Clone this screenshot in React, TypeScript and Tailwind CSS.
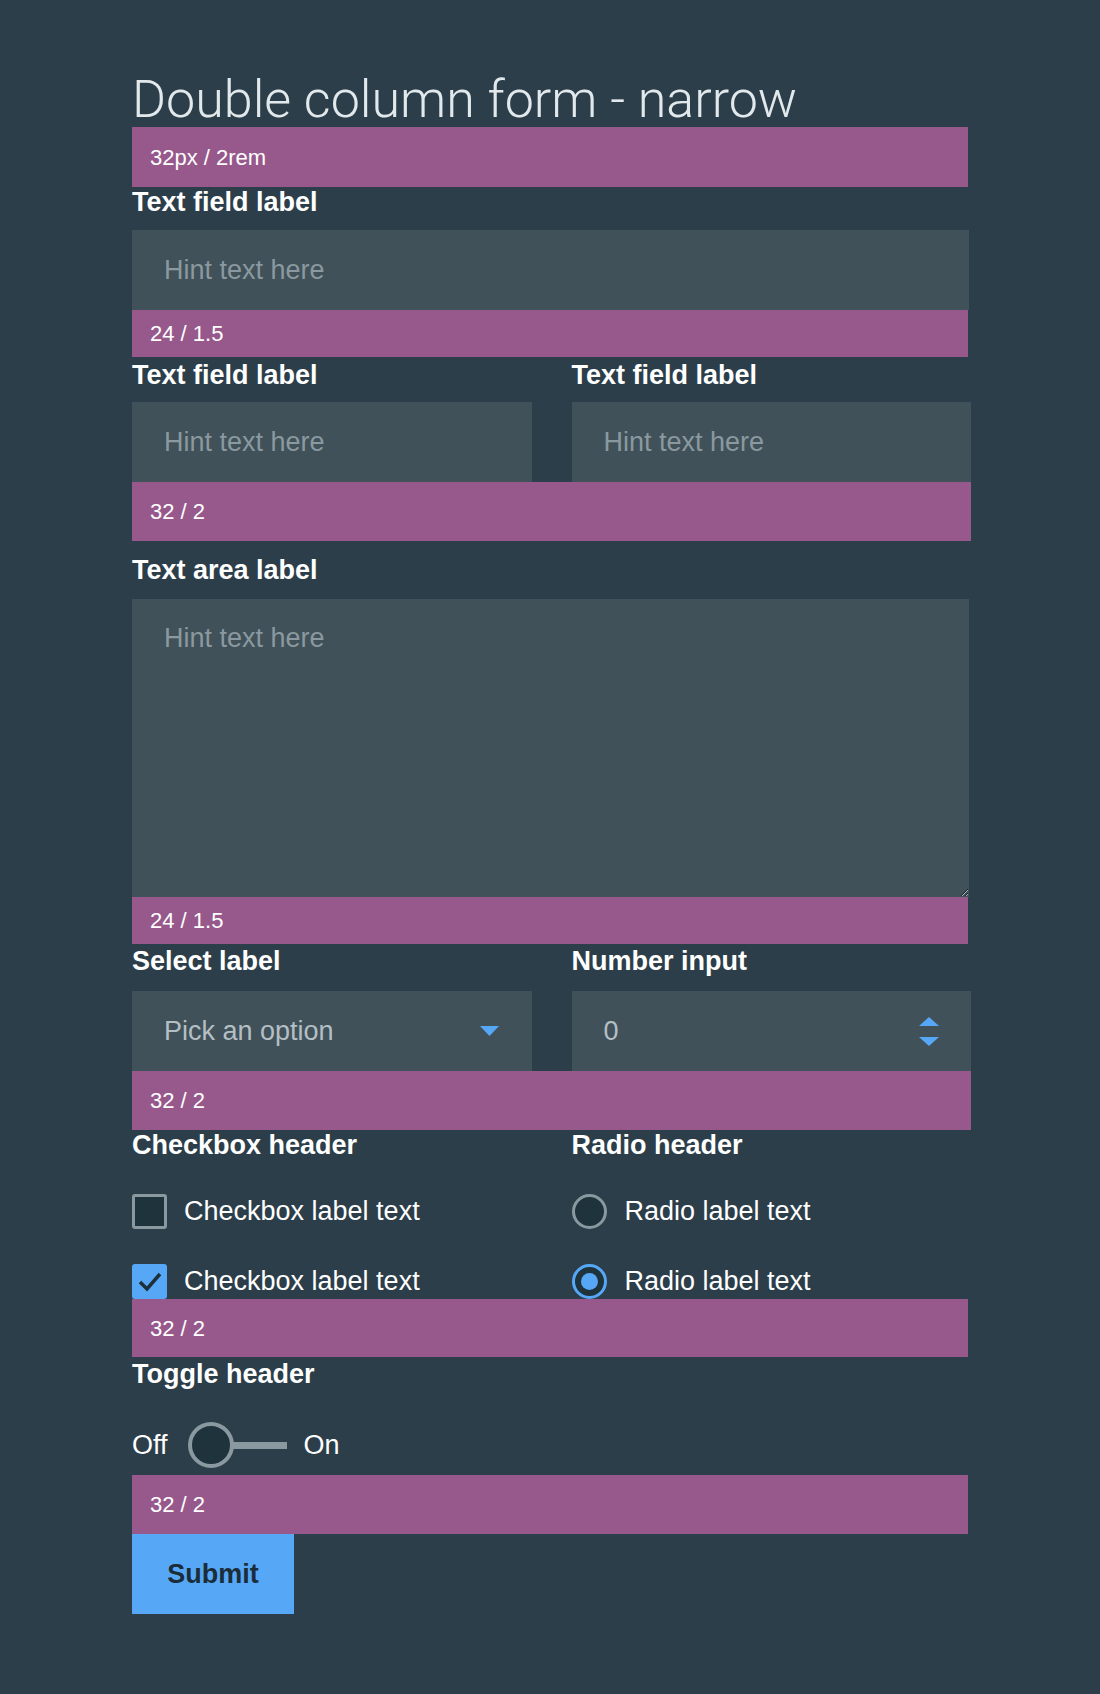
import * as React from "react"

function Band({ text, wide = false }: { text: string; wide?: boolean }) {
  return (
    <div
      className={`flex items-center bg-[#97598b] pl-[18px] text-[22px] text-white ${wide ? "w-[839px]" : "w-[836px]"}`}
    >
      {text}
    </div>
  )
}

function Label({ children }: { children: React.ReactNode }) {
  return <div className="text-[27px] font-bold leading-[30px] text-white">{children}</div>
}

function Checkbox({ checked }: { checked?: boolean }) {
  if (checked) {
    return (
      <span className="flex h-[35px] w-[35px] shrink-0 items-center justify-center rounded-[3px] bg-[#56a8f7]">
        <svg width="26" height="22" viewBox="0 0 26 22">
          <path d="M3 11 L10 18 L23 3" fill="none" stroke="#1d2f3a" strokeWidth="3.5" />
        </svg>
      </span>
    )
  }
  return <span className="h-[35px] w-[35px] shrink-0 rounded-[3px] border-[3px] border-[#8a989f] bg-[#1f333d]" />
}

function Radio({ checked }: { checked?: boolean }) {
  if (checked) {
    return (
      <span className="flex h-[35px] w-[35px] shrink-0 items-center justify-center rounded-full border-[3px] border-[#56a8f7] bg-[#1f333d]">
        <span className="h-[17px] w-[17px] rounded-full bg-[#56a8f7]" />
      </span>
    )
  }
  return <span className="h-[35px] w-[35px] shrink-0 rounded-full border-[3px] border-[#8a989f] bg-[#1f333d]" />
}

export default function App() {
  const [on, setOn] = React.useState(false)
  const [num, setNum] = React.useState(0)

  return (
    <div className="min-h-[1694px] bg-[#2c3e4a] pl-[132px] font-['Liberation_Sans',Arial,sans-serif]">
      <div className="w-[839px]">
        <h1 className="h-[127px] pt-[74px] font-['Roboto',sans-serif] text-[52px] font-light leading-[52px] text-[#e2e9ec]">
          Double column form - narrow
        </h1>
        <div className="h-[60px] flex"><Band text="32px / 2rem" /></div>

        <div className="h-[43px]"><Label>Text field label</Label></div>
        <input
          placeholder="Hint text here"
          className="h-[80px] w-[837px] bg-[#405159] px-[32px] text-[27px] text-white outline-none placeholder:text-[#8a999f]"
        />
        <div className="h-[47px] flex"><Band text="24 / 1.5" /></div>

        <div className="grid h-[45px] grid-cols-2 gap-[40px] pt-[3px]">
          <Label>Text field label</Label>
          <Label>Text field label</Label>
        </div>
        <div className="grid grid-cols-2 gap-[40px]">
          <input
            placeholder="Hint text here"
            className="h-[80px] bg-[#405159] px-[32px] text-[27px] text-white outline-none placeholder:text-[#8a999f]"
          />
          <input
            placeholder="Hint text here"
            className="h-[80px] bg-[#405159] px-[32px] text-[27px] text-white outline-none placeholder:text-[#8a999f]"
          />
        </div>
        <div className="h-[59px] flex"><Band text="32 / 2" wide /></div>

        <div className="h-[58px] pt-[14px]"><Label>Text area label</Label></div>
        <textarea
          placeholder="Hint text here"
          className="block h-[298px] w-[837px] resize-y bg-[#405159] px-[32px] pt-[24px] text-[27px] leading-[30px] text-white outline-none placeholder:text-[#8a999f]"
        />
        <div className="h-[47px] flex"><Band text="24 / 1.5" /></div>

        <div className="grid h-[47px] grid-cols-2 gap-[40px] pt-[2px]">
          <Label>Select label</Label>
          <Label>Number input</Label>
        </div>
        <div className="grid grid-cols-2 gap-[40px]">
          <div className="flex h-[80px] items-center justify-between bg-[#405159] pl-[32px] pr-[33px] text-[27px] text-[#b4bfc4]">
            <span>Pick an option</span>
            <svg width="19" height="10" viewBox="0 0 19 10">
              <path d="M0 0 H19 L9.5 10 Z" fill="#56a8f7" />
            </svg>
          </div>
          <div className="flex h-[80px] items-center justify-between bg-[#405159] pl-[32px] pr-[32px] text-[27px] text-[#b4bfc4]">
            <span>{num}</span>
            <div className="flex flex-col gap-[11px]">
              <svg width="20" height="9" viewBox="0 0 20 9" onClick={() => setNum(num + 1)}>
                <path d="M0 9 H20 L10 0 Z" fill="#56a8f7" />
              </svg>
              <svg width="20" height="9" viewBox="0 0 20 9" onClick={() => setNum(num - 1)}>
                <path d="M0 0 H20 L10 9 Z" fill="#56a8f7" />
              </svg>
            </div>
          </div>
        </div>
        <div className="h-[59px] flex"><Band text="32 / 2" wide /></div>

        <div className="grid grid-cols-2 gap-[40px]">
          <div>
            <div className="h-[46px]"><Label>Checkbox header</Label></div>
            <div className="flex h-[70px] items-start gap-[17px] pt-[18px]">
              <Checkbox />
              <span className="text-[27px] leading-[35px] text-white">Checkbox label text</span>
            </div>
            <div className="flex h-[53px] items-start gap-[17px] pt-[18px]">
              <Checkbox checked />
              <span className="text-[27px] leading-[35px] text-white">Checkbox label text</span>
            </div>
          </div>
          <div>
            <div className="h-[46px]"><Label>Radio header</Label></div>
            <div className="flex h-[70px] items-start gap-[18px] pt-[18px]">
              <Radio />
              <span className="text-[27px] leading-[35px] text-white">Radio label text</span>
            </div>
            <div className="flex h-[53px] items-start gap-[18px] pt-[18px]">
              <Radio checked />
              <span className="text-[27px] leading-[35px] text-white">Radio label text</span>
            </div>
          </div>
        </div>
        <div className="h-[58px] flex"><Band text="32 / 2" /></div>

        <div className="h-[65px] pt-[2px]"><Label>Toggle header</Label></div>
        <div className="flex h-[53px] items-start text-[27px] leading-[46px] text-white">
          <span>Off</span>
          <button className="relative ml-[20px] flex h-[46px] w-[99px] shrink-0 items-center" onClick={() => setOn(!on)}>
            <span className="absolute left-[20px] right-0 h-[7px] bg-[#8a989f]" />
            <span className="relative h-[46px] w-[46px] shrink-0 rounded-full border-[4px] border-[#8a989f] bg-[#1f333d]" />
          </button>
          <span className="ml-[17px]">On</span>
        </div>
        <div className="h-[59px] flex"><Band text="32 / 2" /></div>

        <button className="h-[80px] w-[162px] bg-[#56a8f7] text-[27px] font-bold text-[#1b2d39]">Submit</button>
      </div>
    </div>
  )
}
